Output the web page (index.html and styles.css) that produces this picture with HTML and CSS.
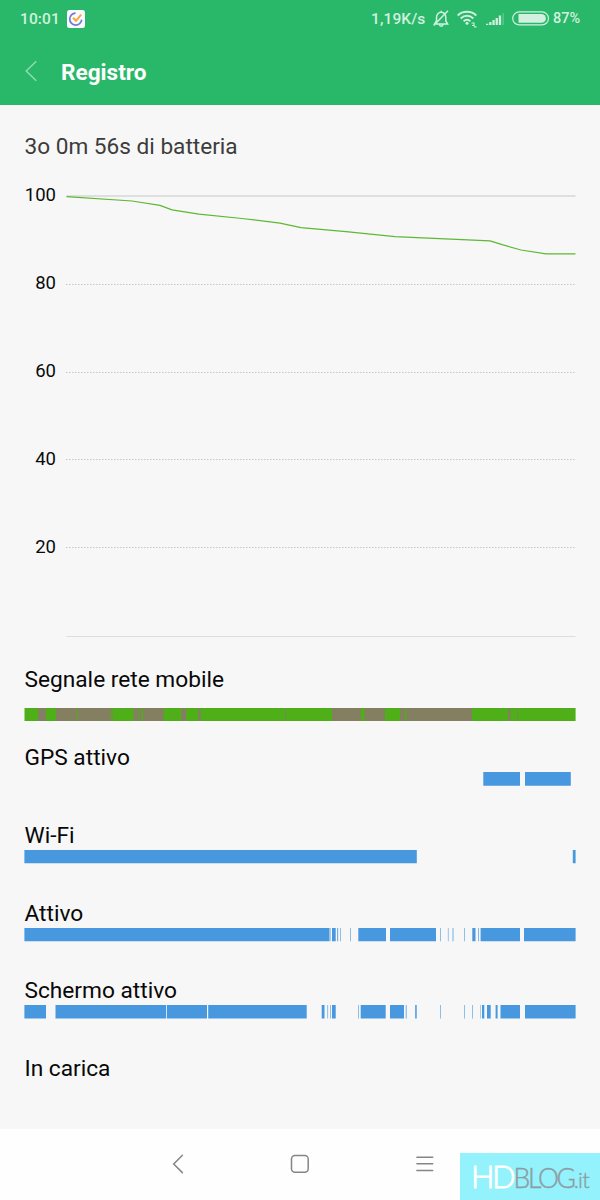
FILE: index.html
```html
<!DOCTYPE html>
<html lang="it">
<head>
<meta charset="utf-8">
<title>Registro</title>
<link rel="stylesheet" href="styles.css">
</head>
<body>
<div class="screen">
  <header class="header">
    <div class="status">
      <span class="clock">10:01</span>
      <svg class="app-icon" width="18" height="18" viewBox="0 0 18 18"><rect width="18" height="18" rx="2.5" fill="#fbfbff"/><path d="M8.600 3.100A6 6 0 1 0 14.700 9.600" fill="none" stroke="#6f7bd6" stroke-width="1.700"/><path d="M6 7.800l3 3L14.200 4.600" fill="none" stroke="#f5ac32" stroke-width="2"/></svg>
      <span class="speed">1,19K/s</span>
      <svg class="bell" width="16" height="18" viewBox="0 0 16 18" fill="none" stroke="currentColor" stroke-width="1.500"><path d="M1.600 14h13L12.800 11V7.500C12.800 4.400 11 2.500 8.300 2.300S3.500 4.500 3.500 7.500V11zM8.200 2.300V.8M6.500 14.500c.2 2.200 3.300 2.200 3.500 0M15 .8L.7 15.500"/></svg>
      <svg class="wifi" width="20" height="18" viewBox="0 0 20 18" fill="none" stroke="currentColor" stroke-width="2"><path d="M.7 5.500C5.500.5 14.500.5 19.300 5.500M3.700 8.500c3.700-3.600 9-3.600 12.600 0M6.600 11.300c2-1.900 4.800-1.900 6.800 0"/><circle cx="10" cy="13.300" r="1.500" fill="currentColor" stroke="none"/><path d="M14.500 13h2.500v2.500h-2M17 16.800h2.500" stroke-width="1.200"/></svg>
      <svg class="signal" width="18" height="13" viewBox="0 0 18 13" fill="currentColor"><path d="M0 10.800h2.300V12H0zM3.200 9h2.300v3H3.200zM6.400 7h2.300v5H6.400zM9.600 5h2.300v7H9.600zM12.800 2.500h2.300V12h-2.300z"/><path d="M16.300 0H18v12h-1.700z" opacity=".25"/></svg>
      <svg class="battery" width="38" height="15" viewBox="0 0 38 15"><rect x=".7" y=".9" width="35.800" height="13" rx="6.500" fill="none" stroke="currentColor" stroke-width="1.200"/><path d="M6.500 3H29.500a4.400 4.400 0 0 1 0 8.800H6.500z" fill="currentColor"/></svg>
      <span class="percent">87%</span>
    </div>
    <div class="titlebar">
      <svg class="back" width="14" height="22" viewBox="0 0 14 22"><path d="M12.300 1.300L2.200 11l10.100 9.800" fill="none" stroke="#91dab0" stroke-width="1.500"/></svg>
      <h1 class="title">Registro</h1>
    </div>
  </header>

  <main class="content">
    <h2 class="duration">3o 0m 56s di batteria</h2>
    <section class="chart">
      <div class="axis"><span>100</span><span>80</span><span>60</span><span>40</span><span>20</span></div>
      <svg class="plot" width="510" height="450" viewBox="0 0 510 450" fill="none">
        <path d="M.5 9H509.500" stroke="#d7d7d7" stroke-width="1.500"/>
        <path class="dots" d="M0 97.500H509.500M0 185.500H509.500M0 272.500H509.500M0 360.500H509.500"/>
        <path d="M.5 449.500H509.500" stroke="#dedede"/>
        <path d="M.5 9.600L66 14 94 18.400 106 22.800 133 27.200 176 31.500 214 36.200 235 40.700 280 44.700 329 49.700 424 53.900 437 57.900 455 63 480 66.900H509.500" stroke="#5db833" stroke-width="1.250"/>
      </svg>
    </section>

    <section class="rows">
      <div class="row row-signal">
        <div class="label">Segnale rete mobile</div>
        <svg class="track" width="552" height="14" viewBox="24 0 552 14">
          <path d="M24.500 0H575.600V13H24.500z" fill="#4eaf19"/>
          <path d="M38 0h8v13h-8zM56 0h20.500v13H56zM77.500 0h33v13h-33zM111.500 0h1v13h-1zM133.500 0h5v13h-5zM139.500 0h2v13h-2zM143 0h20.500v13H143zM181 0h5v13h-5zM198 0h2.500v13H198zM285 0h.8v13h-.8zM332 0h29v13h-29zM364.500 0h20.500v13h-20.500zM400 0h5v13h-5zM407.300 0H472v13h-64.700zM508 0h2.300v13H508zM517 0h.8v13h-.8z" fill="#837f60"/>
          <path d="M406 0h.8v13h-.8z" fill="#837f60"/>
        </svg>
      </div>
      <div class="row">
        <div class="label">GPS attivo</div>
        <svg class="track blue" width="552" height="14" viewBox="24 0 552 14"><path d="M483.300 0H520v13.700h-36.700zM525 0h45.800v13.700H525z"/></svg>
      </div>
      <div class="row">
        <div class="label">Wi-Fi</div>
        <svg class="track blue" width="552" height="14" viewBox="24 0 552 14"><path d="M24.400 0H416.800v13.300H24.400zM572.800 0h2.800v13.300h-2.800z"/></svg>
      </div>
      <div class="row">
        <div class="label">Attivo</div>
        <svg class="track blue" width="552" height="14" viewBox="24 0 552 14"><path d="M24.400 0H329v13.300H24.400zM332 0h3.700v13.300H332zM358.300 0H386v13.300h-27.700zM390 0h46v13.300h-46zM472.300 0h3.200v13.300h-3.200zM480.600 0H520v13.300h-39.400zM524 0h51.600v13.300H524z"/><path class="thin" d="M329.300 0h1.300v13.300h-1.300zM337 0h1.200v13.300H337zM340 0h.8v13.300h-.8zM350.200 0h.8v13.300h-.8zM440.200 0h.8v13.300h-.8zM447.900 0h.7v13.300h-.7zM452.500 0h1v13.300h-1zM464 0h.8v13.300h-.8zM478 0h.9v13.300h-.9z"/></svg>
      </div>
      <div class="row">
        <div class="label">Schermo attivo</div>
        <svg class="track blue" width="552" height="14" viewBox="24 0 552 14"><path d="M24.400 0H46v13.600H24.400zM55.500 0h110.700v13.600H55.500zM167 0h40v13.600h-40zM208.200 0h98.500v13.600h-98.500zM321.700 0h2.800v13.600h-2.800zM332 0h3.700v13.600H332zM360.700 0h25v13.600h-25zM390 0h14v13.600h-14zM415.200 0h1.500v13.600h-1.500zM482 0h2.300v13.600H482zM487 0h3.700v13.600H487zM495.600 0h2v13.600h-2zM500.500 0H520v13.600h-19.500zM525 0h50.600v13.600H525z"/><path class="thin" d="M327.300 0h.8v13.600h-.8zM330 0h.8v13.600h-.8zM358.200 0h.8v13.600h-.8zM405.700 0h1v13.600h-1zM440.200 0h.8v13.600h-.8zM464 0h.8v13.600h-.8zM472 0h.8v13.600h-.8zM480.300 0h.6v13.600h-.6z"/></svg>
      </div>
      <div class="row">
        <div class="label">In carica</div>
      </div>
    </section>
  </main>

  <nav class="nav">
    <svg width="12" height="20" viewBox="0 0 12 20"><path d="M10.400 1.300L1.700 10l8.700 8.600" /></svg>
    <svg width="20" height="20" viewBox="0 0 20 20"><rect x="1.500" y="1.500" width="16.700" height="16.700" rx="3.500"/></svg>
    <svg width="18" height="20" viewBox="0 0 18 20"><path d="M.9 3.200H16.700M.9 9.700H16.700M.9 16.500H16.700"/></svg>
  </nav>
  <div class="watermark"><span class="hd">HD</span><span class="blog">BLOG<span class="tld">.it</span></span></div>
</div>
</body>
</html>
```

FILE: styles.css
```css
* { box-sizing: border-box; }
body { margin: 0; font-family: Roboto, "Noto Sans", sans-serif; background: #f7f7f7; }
svg { display: block; flex: none; }
.screen { position: relative; width: 600px; height: 1200px; overflow: hidden; display: flex; flex-direction: column; background: #f7f7f7; }
.header { height: 105px; flex: none; background: #29b869; }
.status { height: 37px; display: flex; align-items: center; padding-left: 20px; color: #d2f0df; font-size: 15.500px; font-weight: 500; line-height: 20px; white-space: nowrap; }
.clock { width: 47px; letter-spacing: .1px; }
.speed { width: 62px; margin-left: 286px; letter-spacing: .1px; }
.wifi { margin-left: 8px; }
.signal { margin: 2px 0 0 9px; }
.battery { margin-left: 8px; }
.percent { margin-left: 3px; font-size: 14.500px; }
.titlebar { height: 68px; display: flex; align-items: center; padding-left: 24px; }
.title { margin: 4px 0 0 23px; font-size: 22.600px; line-height: 30px; font-weight: 700; color: #fff; }
.content { flex: 1; min-height: 0; padding: 27px 24px 0; }
.duration { margin: 0 0 0 .5px; font-size: 22.620px; line-height: 30px; font-weight: 400; color: #3c3c3c; }
.chart { height: 450px; margin-top: 25px; display: flex; gap: 10px; }
.axis { width: 32px; height: 375.500px; display: flex; flex-direction: column; justify-content: space-between; align-items: flex-end; margin-top: -4px; font-size: 18.500px; line-height: 24px; color: #0a0a0a; }
.plot { overflow: visible; }
.dots { stroke: #c6c6c6; stroke-width: 1; stroke-dasharray: 1.500 1.500; }
.rows { margin-top: 28px; }
.row { height: 77.850px; }
.label { height: 29px; line-height: 30px; font-size: 22.700px; color: #080808; padding-left: .5px; white-space: nowrap; }
.row-signal .label { margin-bottom: 14px; }
.blue { fill: #4798de; }
.thin { opacity: .75; }
.nav { height: 71.500px; flex: none; background: #fefefe; display: flex; align-items: center; padding-left: 172px; }
.nav svg { fill: none; stroke: #858585; stroke-width: 1.500; stroke-linecap: round; }
.nav svg + svg { margin-left: 106px; }
.watermark { position: absolute; right: 0; bottom: 0; width: 140px; height: 47px; display: flex; align-items: baseline; background: #94f2fc; padding: 3px 0 0 11px; font-family: Lato, "Open Sans", sans-serif; font-weight: 300; line-height: 40px; white-space: nowrap; }
.hd { width: 42.500px; font-size: 31px; letter-spacing: -2.500px; color: #fff; -webkit-text-stroke: .9px #fff; }
.blog { font-size: 26.500px; letter-spacing: -2.300px; color: #8d9da3; -webkit-text-stroke: .4px #8d9da3; }
.tld { font-size: 22px; letter-spacing: -.8px; }
```
